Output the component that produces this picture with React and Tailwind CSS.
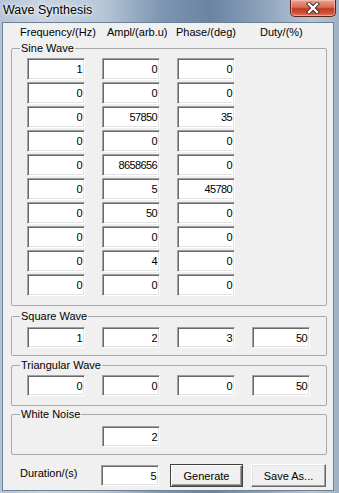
const sine = [
  ['1', '0', '0'],
  ['0', '0', '0'],
  ['0', '57850', '35'],
  ['0', '0', '0'],
  ['0', '8658656', '0'],
  ['0', '5', '45780'],
  ['0', '50', '0'],
  ['0', '0', '0'],
  ['0', '4', '0'],
  ['0', '0', '0'],
];

function Field({ value, tall }) {
  return (
    <div
      className={`w-[58px] ${tall ? 'h-[22px]' : 'h-[21px]'} bg-white border border-t-[#a0a0a0] border-l-[#a0a0a0] border-b-white border-r-white shadow-[inset_1px_1px_0_#696969,inset_-1px_-1px_0_#e3e3e3] flex items-center justify-end pr-[2px] pt-[1px] text-[11px] leading-[13px] tracking-[-0.6px] text-black`}
    >
      {value}
    </div>
  );
}

function Group({ label, className, children }) {
  return (
    <fieldset className={`mx-[8px] w-[316px] border border-[#a9a9a9] rounded-[2px] ${className}`}>
      <legend className="ml-[8px] px-[1px] text-[11px] leading-[13px] text-black">{label}</legend>
      {children}
    </fieldset>
  );
}

function Row({ values, tall }) {
  return (
    <div className="flex gap-x-[17px] pl-[15px]">
      {values.map((v, i) =>
        v === null ? <div key={i} className="w-[58px]" /> : <Field key={i} value={v} tall={tall} />
      )}
    </div>
  );
}

export default function App() {
  return (
    <div className="w-[339px] h-[493px] overflow-hidden font-['Liberation_Sans',Arial,sans-serif] bg-[linear-gradient(90deg,#b3c4d6_0%,#c7d4e2_12%,#b7c7d8_30%,#7c95b0_48%,#6a84a1_62%,#8ea4bc_78%,#b6c6d7_92%,#9fb3c8_100%)]">
      {/* title bar */}
      <div className="h-[23px] flex justify-between">
        <div className="pl-[3px] pt-[2px] text-[12.5px] leading-[16px] text-black [text-shadow:0_0_6px_#ffffff,0_0_3px_#ffffff]">
          Wave Synthesis
        </div>
        <div className="mr-[3px] w-[46px] h-[17px] rounded-b-[5px] border border-t-0 border-[#5e2216] bg-[linear-gradient(#eba595,#d86c55_45%,#c13a20_55%,#d2583e_85%,#e0826a)] flex items-center justify-center shadow-[inset_0_0_0_1px_rgba(255,210,200,0.5)]">
          <svg width="14" height="12" viewBox="0 0 14 12">
            <path d="M3 2 L11 10 M11 2 L3 10" stroke="#3b2a2a" strokeWidth="4.2" strokeLinecap="square" />
            <path d="M3 2 L11 10 M11 2 L3 10" stroke="#ffffff" strokeWidth="2.4" strokeLinecap="square" />
          </svg>
        </div>
      </div>

      {/* client area */}
      <div className="ml-[3px] w-[330px] h-[467px] bg-[#f0f0f0] shadow-[0_0_0_1px_#6f8197] text-black">
        <div className="pt-[3px] h-[16px] relative text-[11px] leading-[13px] flex">
          <span className="ml-[17px] w-[87px]">Frequency/(Hz)</span>
          <span className="w-[69px]">Ampl/(arb.u)</span>
          <span className="w-[84px]">Phase/(deg)</span>
          <span>Duty/(%)</span>
        </div>

        <Group label="Sine Wave" className="mt-[3px] pt-[3px] pb-[9px]">
          <div className="flex flex-col gap-y-[2px]">
            {sine.map((r, i) => (
              <Row key={i} values={r} tall />
            ))}
          </div>
        </Group>

        <Group label="Square Wave" className="mt-[4px] pt-[4px] pb-[7px]">
          <Row values={['1', '2', '3', '50']} />
        </Group>

        <Group label="Triangular Wave" className="mt-[3px] pt-[3px] pb-[9px]">
          <Row values={['0', '0', '0', '50']} />
        </Group>

        <Group label="White Noise" className="mt-[2px] pt-[5px] pb-[7px]">
          <Row values={[null, '2']} />
        </Group>

        <div className="mt-[9px] flex items-start h-[23px]">
          <span className="ml-[17px] w-[81px] pt-[3px] text-[11px] leading-[13px]">Duration/(s)</span>
          <div className="mt-[1px]">
            <Field value="5" />
          </div>
          <button className="ml-[11px] w-[73px] h-[23px] bg-[#f0f0f0] border border-[#404040] shadow-[inset_1px_1px_0_#ffffff,inset_-1px_-1px_0_#696969,inset_-2px_-2px_0_#a0a0a0] text-[11px] leading-[13px] pt-[1px]">
            Generate
          </button>
          <button className="ml-[8px] w-[75px] h-[23px] bg-[#f0f0f0] border border-t-white border-l-white border-b-[#696969] border-r-[#696969] shadow-[inset_-1px_-1px_0_#a0a0a0,inset_1px_1px_0_#e3e3e3] text-[11px] leading-[13px] pt-[1px]">
            Save As...
          </button>
        </div>
      </div>
    </div>
  );
}
